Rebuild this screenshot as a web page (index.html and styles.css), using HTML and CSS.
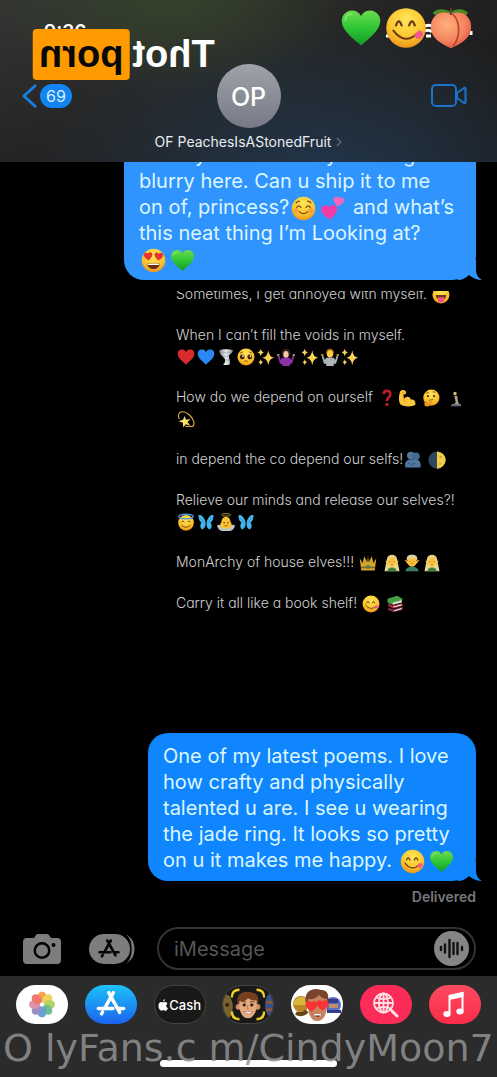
FILE: index.html
```html
<!DOCTYPE html>
<html lang="en">
<head>
<meta charset="utf-8">
<meta name="viewport" content="width=device-width, initial-scale=1">
<title>Messages</title>
<link rel="stylesheet" href="styles.css">
</head>
<body>
<svg class="defs" width="0" height="0" aria-hidden="true">
  <defs>
    <radialGradient id="gFace" cx=".5" cy=".3" r=".75"><stop offset="0" stop-color="#ffe65c"/><stop offset=".6" stop-color="#fcc52d"/><stop offset="1" stop-color="#ec8a19"/></radialGradient>
    <linearGradient id="gGreen" x1="0" y1="0" x2="0" y2="1"><stop offset="0" stop-color="#6ddb4f"/><stop offset=".5" stop-color="#2fc736"/><stop offset="1" stop-color="#12992a"/></linearGradient>
    <radialGradient id="gPeach" cx=".4" cy=".35" r=".75"><stop offset="0" stop-color="#ffb07a"/><stop offset=".6" stop-color="#f58360"/><stop offset="1" stop-color="#d9503f"/></radialGradient>
    <linearGradient id="gStore" x1="0" y1="0" x2="0" y2="1"><stop offset="0" stop-color="#1cc2f8"/><stop offset="1" stop-color="#1b63ee"/></linearGradient>
    <linearGradient id="gTorn" x1="0" y1="0" x2="1" y2="0"><stop offset="0" stop-color="#79808a"/><stop offset=".5" stop-color="#e9edf0"/><stop offset="1" stop-color="#858b95"/></linearGradient>
    <path id="heart" d="M12 22C8 18.500 1 13.500 1 8a5.800 5.800 0 0 1 11-2.800A5.800 5.800 0 0 1 23 8c0 5.500-7 10.500-11 14z"/>
    <symbol id="e-green" viewBox="0 0 24 24"><use href="#heart" fill="url(#gGreen)"/><path d="M3 8c0-3 2-4 4-4" stroke="#9af07c" stroke-width="1" fill="none" opacity=".6"/></symbol>
    <symbol id="e-red" viewBox="0 0 24 24"><use href="#heart" fill="#d92a2d"/></symbol>
    <symbol id="e-blue" viewBox="0 0 24 24"><use href="#heart" fill="#2b87f5"/></symbol>
    <symbol id="e-yum" viewBox="0 0 24 24"><circle cx="12" cy="12" r="11.300" fill="url(#gFace)"/><path d="M6.300 10.500q1.600-4.500 3.200 0M13.800 10.500q1.600-4.500 3.200 0" fill="none" stroke="#6d3a12" stroke-width="1.300" stroke-linecap="round"/><path d="M4.800 13.500q6.500 8.500 13.800 1.500" fill="none" stroke="#6d3a12" stroke-width="1.200" stroke-linecap="round"/><path d="M16.500 16.500l2.500-3c2-.6 3.600 1.700 2.300 3.300-1 1.500-3 2.200-4.800-.3z" fill="#f4588f"/></symbol>
    <symbol id="e-peach" viewBox="0 0 24 24"><path d="M12 3C8 .5 3 1 1.500 3.500 5 6 9 6 12 3c3-2.500 8-2 9.800.5C19 6 15 6 12 3z" fill="#4d8a25"/><path d="M12 4C5 1 0 6 .5 12c.5 6 5.500 9 11.500 11.500C18 21 23 18 23.500 12 24 6 19 1 12 4z" fill="url(#gPeach)"/><path d="M13 4c5 5 4 14 0 18.500" fill="none" stroke="#ba4632" stroke-width="1"/><path d="M12 4.500V.7" stroke="#654321" stroke-width="1"/></symbol>
    <symbol id="e-blush" viewBox="0 0 24 24"><circle cx="12" cy="12" r="11.300" fill="url(#gFace)"/><path d="M5.500 11q2-3 4 0M14.500 11q2-3 4 0M8 15q4 4 8 0M5 6.500q1.500-1.500 3-1.500M19 6.500Q17.500 5 16 5" fill="none" stroke="#7b4213" stroke-width="1.200" stroke-linecap="round"/><circle cx="5" cy="14" r="2.500" fill="#f38a45" opacity=".6"/><circle cx="19" cy="14" r="2.500" fill="#f38a45" opacity=".6"/></symbol>
    <symbol id="e-two" viewBox="0 0 24 24"><use href="#heart" fill="#f43ba5" transform="translate(0 8) rotate(-4) scale(.7)"/><use href="#heart" fill="#f966b9" transform="translate(13.500 -1) rotate(12) scale(.46)"/></symbol>
    <symbol id="e-eyes" viewBox="0 0 24 24"><circle cx="12" cy="12" r="11.300" fill="url(#gFace)"/><use href="#heart" fill="#e8322e" transform="translate(2 4) rotate(-5) scale(.38)"/><use href="#heart" fill="#e8322e" transform="translate(12.800 3.300) rotate(5) scale(.38)"/><path d="M6 15h12c0 7-12 7-12 0z" fill="#6b2e18"/><path d="M6.500 15h11v1.300h-11z" fill="#fff"/></symbol>
    <symbol id="e-tornado" viewBox="0 0 24 24"><path d="M3 3c2-2 16-2 18 0 1 3-4 4-5 8 0 4 2 6 1 11-3 1-7 1-9 0 3-3 4-5 2-8C6 10 3 7 3 3z" fill="url(#gTorn)"/><path d="M4 5q9 3 16 0M8 11q5 1 8-1M11 16h5" stroke="#9aa1aa" fill="none"/></symbol>
    <symbol id="e-plead" viewBox="0 0 24 24"><circle cx="12" cy="12" r="11.300" fill="url(#gFace)"/><circle cx="7" cy="12" r="3.200" fill="#44240f"/><circle cx="17" cy="12" r="3.200" fill="#44240f"/><circle cx="8" cy="10.700" r="1.200" fill="#fff"/><circle cx="18" cy="10.700" r="1.200" fill="#fff"/><path d="M9.500 18q2.500-2 5 0M4 7l4-2M20 7l-4-2" stroke="#7b4213" stroke-width="1.100" fill="none"/></symbol>
    <symbol id="e-spark" viewBox="0 0 24 24"><path d="M15 3q1 9 8 10-7 1-8 10-1-9-8-10 7-1 8-10zM5 1q.5 4 4 5-3.500 1-4 5-.5-4-4-5 3.500-1 4-5zM5 15q.5 3.500 3 4-2.500.5-3 4-.5-3.500-3-4 2.500-.5 3-4z" fill="#fbd256"/></symbol>
    <symbol id="e-shrugw" viewBox="0 0 24 24"><circle cx="12" cy="7" r="6" fill="#33211e"/><ellipse cx="12" cy="8.500" rx="3.500" ry="4.500" fill="#f3c8ad"/><path d="M7 13h10l2 3 2-6 2 1-3 10h-3v3H7v-3H4L1 11l2-1 2 6z" fill="#8b32a8"/><path d="M1 11 0 8l4 1zm22 0 1-3-4 1z" fill="#f3c8ad"/></symbol>
    <symbol id="e-shrugm" viewBox="0 0 24 24"><circle cx="12" cy="6" r="5" fill="#a8661a"/><ellipse cx="12" cy="8" rx="4" ry="5" fill="#ffce3c"/><path d="M7 13h10l2 3 2-6 2 1-3 10h-3v3H7v-3H4L1 11l2-1 2 6z" fill="#adb4b8"/><path d="M1 11 0 8l4 1zm22 0 1-3-4 1z" fill="#ffce3c"/></symbol>
    <symbol id="e-q" viewBox="0 0 24 24"><path d="M7.500 7c0-6 9-6 9 0 0 4-4.500 4-4.500 9" fill="none" stroke="#c01c27" stroke-width="3.500"/><circle cx="12" cy="20.500" r="2.200" fill="#c01c27"/></symbol>
    <symbol id="e-arm" viewBox="0 0 24 24"><path d="M3 3c2-3 7-2 8 1 0 3-2 4-4 3l1 6c4-4 8-3 9 1 5-1 7 3 6 7-4 3-14 3-19 0-4-4-3-12-1-18z" fill="#fcc63a"/><path d="M8 13q-1 3 2 4M6 5l4-1" stroke="#ce8918" fill="none"/></symbol>
    <symbol id="e-think" viewBox="0 0 24 24"><circle cx="12.500" cy="11.500" r="10.800" fill="url(#gFace)"/><circle cx="8" cy="9.500" r="1.500" fill="#5d310f"/><circle cx="16" cy="9.500" r="1.500" fill="#5d310f"/><path d="M5.500 6q2-2 4-1M14 4q3-1 4 1M9 15l6-1" stroke="#6d3a12" fill="none"/><path d="M5 16c1-2 2 0 2 2l6-2c2 1 0 2-1 3 0 3-3 5-7 4-3-2-2-5 0-7z" fill="#e99b1e"/></symbol>
    <symbol id="e-statue" viewBox="0 0 24 24"><circle cx="12" cy="6" r="2.200" fill="#d5bd78"/><path d="M11 9h4l1 8 3 5H8l5-4z" fill="#a9a58c"/><path d="M8 20h12v3H6z" fill="#697078"/></symbol>
    <symbol id="e-dizzy" viewBox="0 0 24 24"><path d="M3 12C-1 2 8-1 17 7c6 6 7 12 4 15H11" fill="none" stroke="#dda63f" stroke-width="1.500"/><path d="M10 8l2 5 6-1-4 4 4 5-6-2-4 4v-6l-6-2 6-2z" fill="#ffe069"/></symbol>
    <symbol id="e-hug" viewBox="0 0 24 24"><circle cx="9" cy="6" r="5" fill="#50759c"/><circle cx="16" cy="7" r="5" fill="#456a91"/><path d="M2 22c-2-7 2-11 7-11h7c5 1 7 5 6 11z" fill="#50769f"/><path d="M5 16q5 4 10 0" stroke="#365678" fill="none"/></symbol>
    <symbol id="e-moon" viewBox="0 0 24 24"><circle cx="12" cy="12" r="11.500" fill="#2f465f"/><path d="M12 .5a11.500 11.500 0 0 1 0 23z" fill="#f3cd45"/><circle cx="17" cy="8" r="2" fill="#d7a932"/><circle cx="16" cy="17" r="1.500" fill="#d7a932"/></symbol>
    <symbol id="e-halo" viewBox="0 0 24 24"><circle cx="12" cy="13" r="10.500" fill="url(#gFace)"/><ellipse cx="12" cy="4.500" rx="9.500" ry="3" fill="none" stroke="#4a92de" stroke-width="2"/><path d="M6 12q2-3 4 0M14 12q2-3 4 0M6 16q6 6 12 0" stroke="#6d3a12" stroke-width="1.200" fill="none"/></symbol>
    <symbol id="e-fly" viewBox="0 0 24 24"><path d="M11.500 12C9 4 4 2 2 3c0 6 2 8 4 10-3 4-1 8 1 9 3-1 5-5 4.500-10zM13 12c2-8 7-10 9-9 0 6-2 8-4 10 3 4 1 8-1 9-3-1-5-5-4-10z" fill="#43b6ed"/><path d="M5 7l5 7M19 7l-5 7" stroke="#2b8fcb" fill="none"/></symbol>
    <symbol id="e-angel" viewBox="0 0 24 24"><ellipse cx="12" cy="2.500" rx="6" ry="1.700" fill="none" stroke="#bd953b" stroke-width="1.200"/><path d="M0 17c3-3 6 0 7 3h10c1-3 4-6 7-3-1 4-4 7-7 7H7c-3 0-6-3-7-7z" fill="#bec5cd"/><path d="M12 5c-4 0-6 4-6 7-4 5-1 9 6 9s10-4 6-9c0-3-2-7-6-7z" fill="#fac336"/><circle cx="9.500" cy="13" r="1" fill="#5b330d"/><circle cx="14.500" cy="13" r="1" fill="#5b330d"/><path d="M10 17h4" stroke="#7a3d12"/></symbol>
    <symbol id="e-crown" viewBox="0 0 24 24"><path d="M1 6l4 6 2-9 4 8 1-9 1 9 4-8 2 9 4-6-2 16H3z" fill="#d4a530"/><path d="M3 18h18" stroke="#875d16" stroke-width="2"/><circle cx="12" cy="17" r="2.500" fill="#268b4b"/></symbol>
    <symbol id="e-elfw" viewBox="0 0 24 24"><path d="M12 1C5 1 5 8 4 13L2 23h20l-2-10C19 8 19 1 12 1z" fill="#ead590"/><path d="M3 9l4 1v5zM21 9l-4 1v5z" fill="#f8c541"/><ellipse cx="12" cy="11" rx="5" ry="6.500" fill="#fac23d"/><path d="M6 23q0-5 6-5t6 5z" fill="#397f46"/><path d="M9 10h1M14 10h1M11 14h2" stroke="#774714"/></symbol>
    <symbol id="e-elfm" viewBox="0 0 24 24"><path d="M5 8Q4 1 12 1t7 7z" fill="#ded0a0"/><path d="M2 8l5 1v5zM22 8l-5 1v5z" fill="#f8c541"/><ellipse cx="12" cy="10" rx="6" ry="7" fill="#fac23d"/><path d="M5 7Q6 1 12 1t7 6q-7-3-14 0z" fill="#ded0a0"/><path d="M3 23q1-6 9-6t9 6z" fill="#397f60"/><path d="M9 10h1M14 10h1M11 13h2" stroke="#774714"/></symbol>
    <symbol id="e-books" viewBox="0 0 24 24"><path d="M2 5l13-4 7 4-1 5-12 3-7-3z" fill="#46a047"/><path d="M9 10l12-3v3L9 13z" fill="#dedac4"/><path d="M3 11l6 3 13-3v4L10 18l-7-3z" fill="#ad263c"/><path d="M3 17l7 2 12-3v4l-12 3-7-3z" fill="#813145"/><path d="M10 16l11-3M11 21l10-3" stroke="#eee" stroke-width="1.500"/></symbol>
    <symbol id="e-wink" viewBox="0 0 24 24"><circle cx="12" cy="12" r="11.300" fill="url(#gFace)"/><path d="M5 12h14c0 9-14 9-14 0z" fill="#753716"/><path d="M8 15h8v4c0 4-8 4-8 0z" fill="#f35282"/></symbol>
    <symbol id="store-a" viewBox="0 0 24 24"><path d="M13.800 3.500 7.200 15.300M10.300 3.500l8.200 14.800M2.500 15.300h11M17 15.300h4.500M5.700 18l-.8 1.400" fill="none" stroke="currentColor" stroke-width="2.600" stroke-linecap="round"/></symbol>
  </defs>
</svg>

<header class="top">
  <span class="clock">9:36</span>
  <div class="logo"><span>Thot</span><span class="logo-box">porn</span></div>
  <svg class="signal" viewBox="0 0 90 20" aria-hidden="true"><path d="M1 14h5M40 4q5-2 8 1M40 9q4-2 7 1M41 14h5M86 9v4" fill="none" stroke="#fff" stroke-width="3"/></svg>
  <div class="sticker-row">
    <svg><use href="#e-green"/></svg><svg><use href="#e-yum"/></svg><svg><use href="#e-peach"/></svg>
  </div>
  <div class="nav">
    <button class="back" aria-label="Back, 69 unread">
      <svg class="chev" viewBox="0 0 16 26"><path d="M14 2 2 13l12 11" fill="none" stroke="#1580e6" stroke-width="3" stroke-linecap="round" stroke-linejoin="round"/></svg>
      <span class="count">69</span>
    </button>
    <div class="avatar">OP</div>
    <button class="video" aria-label="Video call">
      <svg viewBox="0 0 36 24"><rect x="1" y="1" width="24" height="21" rx="4"/><path d="m26 9 7-5q1.500-1 1.500 1v13q0 2-1.500 1l-7-5z"/></svg>
    </button>
  </div>
  <a class="name" href="#">OF PeachesIsAStonedFruit<svg viewBox="0 0 6 10"><path d="m1 1 4 4-4 4" fill="none" stroke="#66707a" stroke-width="1.200"/></svg></a>
</header>

<main class="chat">
  <div class="bubble bubble-first">It is my favorite story missing<br>blurry here. Can u ship it to me<br>on of, princess?<svg class="em"><use href="#e-blush"/></svg><svg class="em"><use href="#e-two"/></svg> and what’s<br>this neat thing I’m Looking at?<br><svg class="em"><use href="#e-eyes"/></svg><svg class="em"><use href="#e-green"/></svg>
    <svg class="tail" viewBox="0 0 24 20"><path d="M18 0v10q0 7 6 10-7 0-13-5-5 5-11 5V0z"/></svg>
  </div>
  <div class="poem">
    <p>Sometimes, I get annoyed with myself. <svg class="em"><use href="#e-wink"/></svg></p>
    <p>When I can’t fill the voids in myself.<br><svg class="em"><use href="#e-red"/></svg><svg class="em"><use href="#e-blue"/></svg><svg class="em"><use href="#e-tornado"/></svg><svg class="em"><use href="#e-plead"/></svg><svg class="em"><use href="#e-spark"/></svg><svg class="em"><use href="#e-shrugw"/></svg> <svg class="em"><use href="#e-spark"/></svg><svg class="em"><use href="#e-shrugm"/></svg><svg class="em"><use href="#e-spark"/></svg></p>
    <p>How do we depend on ourself <svg class="em"><use href="#e-q"/></svg><svg class="em"><use href="#e-arm"/></svg> <svg class="em"><use href="#e-think"/></svg> <svg class="em"><use href="#e-statue"/></svg><br><svg class="em"><use href="#e-dizzy"/></svg></p>
    <p>in depend the co depend our selfs!<svg class="em"><use href="#e-hug"/></svg> <svg class="em"><use href="#e-moon"/></svg></p>
    <p>Relieve our minds and release our selves?!<br><svg class="em"><use href="#e-halo"/></svg><svg class="em"><use href="#e-fly"/></svg><svg class="em"><use href="#e-angel"/></svg><svg class="em"><use href="#e-fly"/></svg></p>
    <p>MonArchy of house elves!!! <svg class="em"><use href="#e-crown"/></svg> <svg class="em"><use href="#e-elfw"/></svg><svg class="em"><use href="#e-elfm"/></svg><svg class="em"><use href="#e-elfw"/></svg></p>
    <p>Carry it all like a book shelf! <svg class="em"><use href="#e-yum"/></svg> <svg class="em"><use href="#e-books"/></svg></p>
  </div>
  <div class="bubble bubble-last">One of my latest poems. I love<br>how crafty and physically<br>talented u are. I see u wearing<br>the jade ring. It looks so pretty<br>on u it makes me happy. <svg class="em"><use href="#e-yum"/></svg><svg class="em"><use href="#e-green"/></svg>
    <svg class="tail" viewBox="0 0 24 20"><path d="M18 0v10q0 7 6 10-7 0-13-5-5 5-11 5V0z"/></svg>
  </div>
  <div class="status">Delivered</div>
</main>

<form class="composer">
  <button type="button" class="cam" aria-label="Camera"><svg viewBox="0 0 38 30"><path fill="#7d7d7d" fill-rule="evenodd" d="M4 4h7l2-3q1-1 2-1h9q1 0 2 1l2 3h6q4 0 4 4v18q0 4-4 4H4q-4 0-4-4V8q0-4 4-4zm15 4a8.500 8.500 0 1 0 0 17 8.500 8.500 0 0 0 0-17zm0 2.500a6 6 0 1 1 0 12 6 6 0 0 1 0-12zM30.500 9a2 2 0 1 0 0 4 2 2 0 0 0 0-4z"/></svg></button>
  <button type="button" class="apps" aria-label="Apps"><svg viewBox="0 0 46 30"><rect width="41" height="30" rx="15" fill="#7d7d7d"/><path d="M38 1.500q7 4 7 13.500t-7 13.500q4-5 4-13.500T38 1.500z" fill="#7d7d7d" stroke="#7d7d7d"/><path d="M37 1q5 5 5 14t-5 14" fill="none" stroke="#000" stroke-width="1.500"/><use href="#store-a" x="8" y="3" width="24" height="24" color="#050505"/></svg></button>
  <div class="field">
    <input type="text" placeholder="iMessage" aria-label="iMessage">
    <button type="button" class="audio" aria-label="Record audio"><svg viewBox="0 0 35 35"><circle cx="17.500" cy="17.500" r="17.500" fill="#858585"/><path d="M7 16v3M11 13.500v8M15.500 9v17M19.500 12v11M23.500 12v11M28 16v3" stroke="#111" stroke-width="2.400" stroke-linecap="round"/></svg></button>
  </div>
</form>

<footer class="dock">
  <nav class="dock-row">
    <button class="app white" aria-label="Photos"><svg viewBox="0 0 52 39"><g transform="translate(26 19.500)" opacity=".88"><ellipse cy="-7.500" rx="4.500" ry="5.500" fill="#f9953b"/><ellipse cy="-7.500" rx="4.500" ry="5.500" fill="#edcf3f" transform="rotate(45)"/><ellipse cy="-7.500" rx="4.500" ry="5.500" fill="#aacb51" transform="rotate(90)"/><ellipse cy="-7.500" rx="4.500" ry="5.500" fill="#59b67e" transform="rotate(135)"/><ellipse cy="-7.500" rx="4.500" ry="5.500" fill="#5294ce" transform="rotate(180)"/><ellipse cy="-7.500" rx="4.500" ry="5.500" fill="#8b7fbb" transform="rotate(225)"/><ellipse cy="-7.500" rx="4.500" ry="5.500" fill="#d785a3" transform="rotate(270)"/><ellipse cy="-7.500" rx="4.500" ry="5.500" fill="#ee665c" transform="rotate(315)"/></g></svg></button>
    <button class="app" aria-label="App Store"><svg viewBox="0 0 52 39"><rect width="52" height="39" fill="url(#gStore)"/><use href="#store-a" x="10" y="3" width="32" height="32" color="#fff"/></svg></button>
    <button class="app dark cash" aria-label="Apple Cash"><svg class="apple" viewBox="0 0 20 24"><path fill="#fff" d="M14 0q0 5-4 5 0-4 4-5zM10 7c2-1 6-2 9 2-4 3-3 8 1 9-2 5-5 7-7 5-2-.8-3-.8-5 0C4 25 0 17 1 12c1-6 5-7 9-5z"/></svg><span>Cash</span></button>
    <button class="app dark" aria-label="Memoji camera"><svg viewBox="0 0 52 39"><ellipse cx="3" cy="22" rx="7" ry="13" fill="#7a622e"/><circle cx="4" cy="20" r="2" fill="#2a2115"/><ellipse cx="51" cy="20" rx="7" ry="13" fill="#36518e"/><path d="M45 17h7M45 25h7" stroke="#8a5938" stroke-width="3"/><path d="M9 12Q9 4 17 4M35 4q8 0 8 8M9 27q0 8 8 8M35 35q8 0 8-8" fill="none" stroke="#f2cf24" stroke-width="2.500"/><path d="M16 21C11 8 22 4 31 7c7 1 7 8 4 15z" fill="#75401f"/><circle cx="16" cy="22" r="3" fill="#d38c66"/><circle cx="36" cy="22" r="3" fill="#d38c66"/><path d="M17 16q6 1 9-3 4 3 9 2c1 10-2 19-9 19s-10-9-9-18z" fill="#e6aa80"/><circle cx="22" cy="20" r="1.700" fill="#352017"/><circle cx="30" cy="20" r="1.700" fill="#352017"/><path d="M19 17q3-2 5 0M28 17q3-2 5 0" stroke="#633318" fill="none"/><path d="M21 27h10q-4 5-10 0z" fill="#fff" stroke="#a75c48" stroke-width=".6"/><path d="M26 20l-1 4h2" fill="none" stroke="#b67451"/></svg></button>
    <button class="app white" aria-label="Memoji stickers"><svg viewBox="0 0 52 39"><circle cx="10" cy="19" r="8" fill="#b98728"/><path d="M3 16q8-8 14 0v4H3z" fill="#d9b93b"/><path d="M5 28q6 3 11-2" stroke="#674718" stroke-width="4" fill="none"/><circle cx="42" cy="20" r="8" fill="#566fc2"/><path d="M35 14h12v4H35zM36 25h14v3H36z" fill="#383a8b"/><path d="M38 21h9" stroke="#c78b65" stroke-width="4"/><path d="M15 19C12 6 22 2 30 5c9 0 8 9 6 15z" fill="#79452c"/><path d="M17 14q7 1 11-4 3 4 8 4c1 13-2 22-10 22s-10-12-9-22z" fill="#c88461"/><use href="#heart" fill="#fa3434" transform="translate(14 15) scale(.54)"/><use href="#heart" fill="#fa3434" transform="translate(25 14) scale(.54)"/><path d="M22 29h9q-4 6-9 0z" fill="#6b211c"/><path d="M23 29h7v1.500h-7z" fill="#fff"/></svg></button>
    <button class="app pink" aria-label="Images"><svg viewBox="0 0 52 39"><g fill="none" stroke="#ffe0e5" stroke-width="1.800"><circle cx="23.500" cy="18" r="9.500"/><ellipse cx="23.500" cy="18" rx="4.500" ry="9.500"/><path d="M23.500 8.500v19M14 18h19M16 12.500q7.500 3 15 0M16 23.500q7.500-3 15 0"/><path d="m31 25 6 6" stroke-width="3" stroke-linecap="round"/></g></svg></button>
    <button class="app red" aria-label="Music"><svg viewBox="0 0 52 39"><path d="M20.500 28V11l13-3v18" fill="none" stroke="#fff" stroke-width="2"/><path d="m20 10 14.500-3v5L20 15z" fill="#fff"/><ellipse cx="18" cy="29" rx="3.700" ry="3" fill="#fff"/><ellipse cx="31" cy="26.500" rx="3.700" ry="3" fill="#fff"/></svg></button>
  </nav>
  <div class="home-bar"></div>
  <div class="watermark">O lyFans.c m/CindyMoon7</div>
</footer>
</body>
</html>
```
FILE: styles.css
```css
* { box-sizing: border-box; }
body {
  margin: 0;
  min-height: 100vh;
  display: flex;
  flex-direction: column;
  background: #000;
  color: #fff;
  font-family: Inter, "Liberation Sans", sans-serif;
  overflow-x: hidden;
}
.defs { position: absolute; }
button { border: 0; padding: 0; background: none; color: inherit; font: inherit; }
button svg { display: block; width: 100%; height: 100%; }
p { margin: 0; }

.top {
  position: relative;
  padding: 64px 22px 10px;
  background:
    radial-gradient(ellipse at 34% 0, #34432b 0, transparent 40%),
    radial-gradient(ellipse at 65% 120%, #22384f 0, transparent 65%),
    linear-gradient(transparent, rgba(20, 20, 20, .5)),
    linear-gradient(90deg, #343434, #292928 60%, #202020);
}
.nav {
  display: grid;
  grid-template-columns: 1fr 64px 1fr;
  align-items: center;
}
.back { display: flex; align-items: center; gap: 3px; }
.back .chev { width: 15px; height: 26px; }
.count {
  padding: 0 6px;
  border-radius: 12px;
  background: #1285f2;
  font-size: 16px;
  line-height: 24px;
  color: #d8f0ff;
}
.avatar {
  height: 64px;
  border-radius: 50%;
  background: linear-gradient(#a0a2aa, #767a85);
  font-size: 25px;
  font-weight: 500;
  line-height: 66px;
  text-align: center;
}
.video { justify-self: end; width: 36px; height: 24px; margin-right: 8px; }
.video svg { fill: none; stroke: #1b74cc; stroke-width: 2; }
.name {
  display: flex;
  justify-content: center;
  align-items: center;
  gap: 5px;
  margin-top: 4px;
  color: #e9edf0;
  font-size: 14px;
  line-height: 20px;
  text-decoration: none;
}
.name svg { width: 6px; height: 10px; }
.clock { position: absolute; left: 44px; top: 21px; font-size: 19px; font-weight: 600; line-height: 22px; }
.logo {
  position: absolute;
  left: 33px;
  top: 29px;
  display: flex;
  gap: 3px;
  transform: scaleX(-1);
  font: bold 38px/50px "Liberation Sans", Arial, sans-serif;
}
.logo-box { height: 51px; padding: 0 6px; border-radius: 4px; background: #ff9a00; color: #080808; }
.signal { position: absolute; right: 22px; top: 22px; width: 90px; height: 20px; }
.sticker-row { position: absolute; right: 25px; top: 7px; display: flex; gap: 3px; }
.sticker-row svg { width: 42px; height: 42px; }

.chat {
  flex: 1;
  display: flex;
  flex-direction: column;
  align-items: flex-end;
  padding: 0 21px;
  overflow: hidden;
}
.bubble {
  position: relative;
  padding: 10px 15px 8px;
  border-radius: 20px;
  color: #dcf6ff;
  font-size: 20px;
  line-height: 26px;
  white-space: nowrap;
}
.bubble-first { width: 352px; margin-top: -20px; padding-top: 0; background: #3094fe; --tail: #3094fe; }
.bubble-last { width: 328px; margin-top: auto; background: #0f86fe; --tail: #0f86fe; }
.tail { position: absolute; right: -6px; bottom: 0; width: 24px; height: 20px; fill: var(--tail); }
/* lets the notch above the tail show the page behind the corner */
.bubble { border-bottom-right-radius: 24px; }
.em { display: inline-block; vertical-align: -5px; width: 25px; height: 25px; margin: -2px 2px; }

.poem {
  width: 300px;
  margin-top: 11px;
  overflow: hidden;
  display: flex;
  flex-direction: column;
  gap: 20px;
  color: #d0d0d0;
  font-size: 14px;
  font-weight: 300;
  line-height: 21px;
  font-feature-settings: "cv11";
  white-space: nowrap;
}
.poem p:first-child { margin-top: -8px; }
.poem .em { width: 18px; height: 18px; margin: -3px 1px; vertical-align: -2px; }
.status { margin: 8px 0 0; color: #77777c; font-size: 14px; font-weight: 600; line-height: 16px; }

.composer { display: flex; align-items: center; padding: 22px 21px 6px 23px; }
.cam { width: 38px; height: 30px; }
.apps { width: 46px; height: 30px; margin: 0 22px 0 28px; }
.field {
  flex: 1;
  display: flex;
  align-items: center;
  min-width: 0;
  height: 43px;
  padding: 0 5px 0 15px;
  border: 2px solid #333;
  border-radius: 22px;
}
.field input {
  flex: 1;
  min-width: 0;
  border: 0;
  padding: 0;
  outline: 0;
  background: none;
  color: #ddd;
  font: 20px/26px Inter, "Liberation Sans", sans-serif;
}
.field input::placeholder { color: #555; opacity: 1; }
.audio { width: 35px; height: 35px; }

.dock { position: relative; padding: 9px 16px 10px; background: #2b2b2b; }
.dock-row { display: flex; justify-content: space-between; }
.app { width: 52px; height: 39px; border-radius: 20px; overflow: hidden; }
.white { background: #fff; }
.dark { background: #191918; border: 1px solid #454545; }
.pink { background: #fb2c58; }
.red { background: linear-gradient(#fb4b62, #f92c48); }
.cash { display: flex; align-items: center; justify-content: center; gap: 1px; font-size: 13px; font-weight: 500; }
.cash .apple { width: 10px; height: 12px; }
.home-bar { width: 177px; height: 7px; margin: 36px auto 0; border-radius: 4px; background: #fff; }
.watermark {
  position: absolute;
  left: 3px;
  bottom: 6px;
  color: rgba(145, 145, 145, .85);
  font: 38px/46px "DejaVu Sans", sans-serif;
  white-space: nowrap;
}
```
